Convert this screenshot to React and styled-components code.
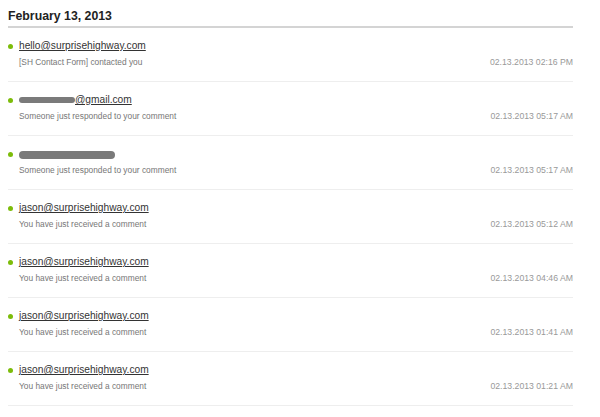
import React from "react";
import styled, { createGlobalStyle } from "styled-components";

const Global = createGlobalStyle`
  html, body { margin: 0; padding: 0; background: #fff; }
  body { font-family: "Liberation Sans", Arial, sans-serif; }
`;

const Page = styled.div`
  width: 565px;
  padding: 8px 0 0 8px;
`;

const Heading = styled.h2`
  margin: 0;
  font-size: 12.3px;
  line-height: 16px;
  font-weight: bold;
  color: #222;
  padding-bottom: 2px;
  border-bottom: 2px solid #d4d4d4;
`;

const List = styled.ul`
  list-style: none;
  margin: 0;
  padding: 0;
`;

const Row = styled.li`
  display: grid;
  grid-template-columns: 1fr auto;
  grid-template-rows: 14px 10px;
  row-gap: 4px;
  padding: 11px 0 14px 0;
  border-bottom: 1px solid #eeeeee;
`;

const Sender = styled.div`
  display: flex;
  align-items: center;
  gap: 6px;
  font-size: 10.2px;
  line-height: 14px;
  color: #333;
`;

const Dot = styled.span`
  width: 5px;
  height: 5px;
  border-radius: 50%;
  background: #7cbc0a;
  flex: none;
`;

const Email = styled.a`
  color: #333;
  text-decoration: underline;
  display: inline-flex;
  align-items: center;
`;

const Redacted = styled.span`
  display: inline-block;
  width: ${(p) => p.$w}px;
  height: ${(p) => p.$h}px;
  border-radius: ${(p) => p.$h / 2}px;
  background: #7a7a7a;
  filter: blur(0.6px);
  margin-top: ${(p) => p.$dy || 0}px;
`;

const Subject = styled.div`
  grid-column: 1;
  padding-left: 11px;
  font-size: 8.35px;
  line-height: 10px;
  color: #777;
`;

const Time = styled.div`
  grid-column: 2;
  grid-row: 2;
  font-size: 8.7px;
  line-height: 10px;
  color: #999;
  text-align: right;
`;

const items = [
  { email: "hello@surprisehighway.com", subject: "[SH Contact Form] contacted you", time: "02.13.2013 02:16 PM" },
  { redact: { w: 56, h: 6 }, email: "@gmail.com", subject: "Someone just responded to your comment", time: "02.13.2013 05:17 AM" },
  { redact: { w: 96, h: 8, dy: 1 }, email: "", subject: "Someone just responded to your comment", time: "02.13.2013 05:17 AM" },
  { email: "jason@surprisehighway.com", subject: "You have just received a comment", time: "02.13.2013 05:12 AM" },
  { email: "jason@surprisehighway.com", subject: "You have just received a comment", time: "02.13.2013 04:46 AM" },
  { email: "jason@surprisehighway.com", subject: "You have just received a comment", time: "02.13.2013 01:41 AM" },
  { email: "jason@surprisehighway.com", subject: "You have just received a comment", time: "02.13.2013 01:21 AM" },
];

export default function App() {
  return (
    <>
      <Global />
      <Page>
        <Heading>February 13, 2013</Heading>
        <List>
          {items.map((it, i) => (
            <Row key={i}>
              <Sender>
                <Dot />
                <Email href="#">
                  {it.redact && <Redacted $w={it.redact.w} $h={it.redact.h} $dy={it.redact.dy} />}
                  {it.email}
                </Email>
              </Sender>
              <Subject>{it.subject}</Subject>
              <Time>{it.time}</Time>
            </Row>
          ))}
        </List>
      </Page>
    </>
  );
}
